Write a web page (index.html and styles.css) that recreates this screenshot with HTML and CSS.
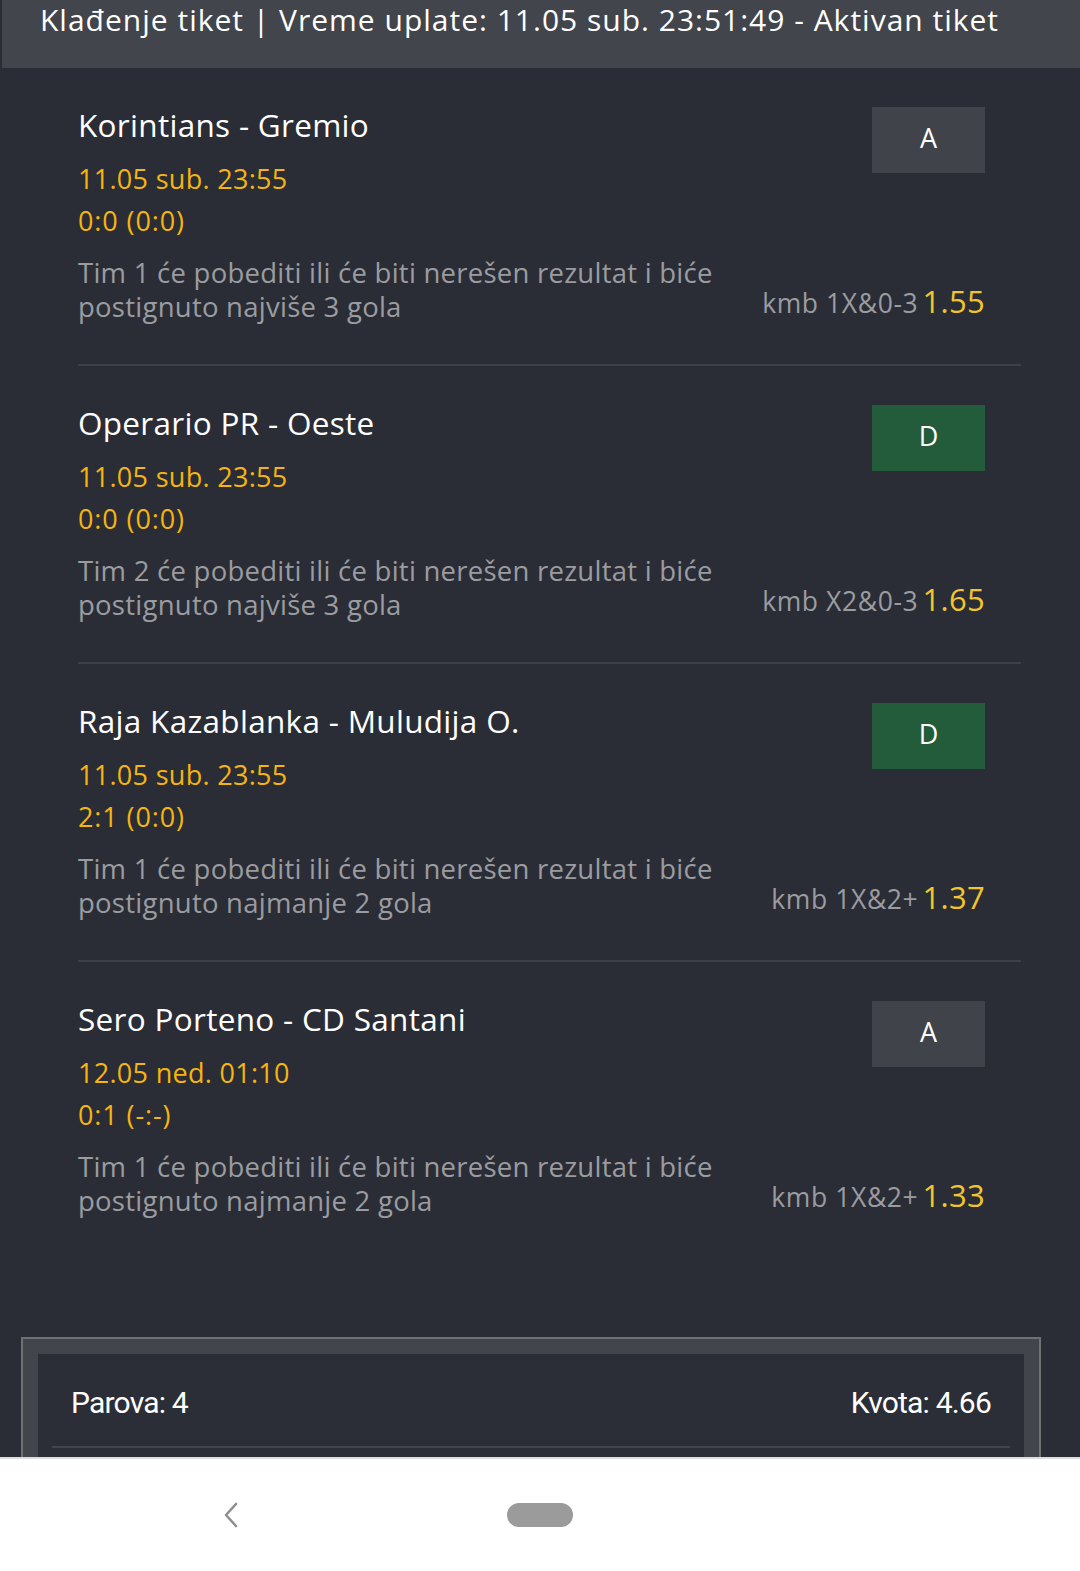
FILE: index.html
```html
<!DOCTYPE html>
<html lang="sr">
<head>
<meta charset="utf-8">
<title>Klađenje tiket</title>
<link rel="stylesheet" href="styles.css">
</head>
<body>
<div class="page">
  <header class="ticket-header">Klađenje tiket | Vreme uplate: 11.05 sub. 23:51:49 - Aktivan tiket</header>

  <main class="matches">
    <section class="match">
      <div class="match-info">
        <h2 class="match-title">Korintians - Gremio</h2>
        <div class="match-time">11.05 sub. 23:55</div>
        <div class="match-score">0:0 (0:0)</div>
        <p class="match-desc">Tim 1 će pobediti ili će biti nerešen rezultat i biće postignuto najviše 3 gola</p>
      </div>
      <div class="match-side">
        <div class="badge badge-grey">A</div>
        <div class="odds"><span class="odds-label">kmb 1X&amp;0-3</span> <span class="odds-value">1.55</span></div>
      </div>
    </section>

    <section class="match">
      <div class="match-info">
        <h2 class="match-title">Operario PR - Oeste</h2>
        <div class="match-time">11.05 sub. 23:55</div>
        <div class="match-score">0:0 (0:0)</div>
        <p class="match-desc">Tim 2 će pobediti ili će biti nerešen rezultat i biće postignuto najviše 3 gola</p>
      </div>
      <div class="match-side">
        <div class="badge badge-green">D</div>
        <div class="odds"><span class="odds-label">kmb X2&amp;0-3</span> <span class="odds-value">1.65</span></div>
      </div>
    </section>

    <section class="match">
      <div class="match-info">
        <h2 class="match-title">Raja Kazablanka - Muludija O.</h2>
        <div class="match-time">11.05 sub. 23:55</div>
        <div class="match-score">2:1 (0:0)</div>
        <p class="match-desc">Tim 1 će pobediti ili će biti nerešen rezultat i biće postignuto najmanje 2 gola</p>
      </div>
      <div class="match-side">
        <div class="badge badge-green">D</div>
        <div class="odds"><span class="odds-label">kmb 1X&amp;2+</span> <span class="odds-value">1.37</span></div>
      </div>
    </section>

    <section class="match match-last">
      <div class="match-info">
        <h2 class="match-title">Sero Porteno - CD Santani</h2>
        <div class="match-time">12.05 ned. 01:10</div>
        <div class="match-score">0:1 (-:-)</div>
        <p class="match-desc">Tim 1 će pobediti ili će biti nerešen rezultat i biće postignuto najmanje 2 gola</p>
      </div>
      <div class="match-side">
        <div class="badge badge-grey">A</div>
        <div class="odds"><span class="odds-label">kmb 1X&amp;2+</span> <span class="odds-value">1.33</span></div>
      </div>
    </section>
  </main>

  <div class="summary">
    <div class="summary-inner">
      <div class="summary-row">
        <span>Parova: 4</span>
        <span>Kvota: 4.66</span>
      </div>
      <div class="summary-rule"></div>
    </div>
  </div>
</div>

<nav class="nav-bar">
  <svg class="nav-back" width="20" height="28" viewBox="0 0 20 28" aria-hidden="true">
    <path d="M14 3 L4 14 L14 25" fill="none" stroke="#8e8e8e" stroke-width="2.6" stroke-linecap="round" stroke-linejoin="round"/>
  </svg>
  <div class="nav-home"></div>
  <div class="nav-spacer"></div>
</nav>
</body>
</html>
```

FILE: styles.css
```css
html, body {
  margin: 0;
  padding: 0;
}

body {
  background: #2a2d36;
  font-family: "Open Sans", "DejaVu Sans", sans-serif;
  height: 1571px;
  overflow: hidden;
}

.page {
  display: flex;
  flex-direction: column;
  height: 1571px;
  overflow: hidden;
}

.ticket-header {
  margin-left: 2px;
  background: #42454c;
  color: #ffffff;
  font-size: 30px;
  line-height: 40px;
  height: 40px;
  padding: 0 0 28px 38px;
  white-space: nowrap;
  overflow: hidden;
  letter-spacing: 1px;
  flex: none;
}

.matches {
  display: flex;
  flex-direction: column;
  padding: 0 59px 0 78px;
  flex: none;
}

.match {
  display: flex;
  justify-content: space-between;
  padding: 37px 36px 40px 0;
  border-bottom: 2px solid #3d4048;
}

.match-last {
  border-bottom: none;
  padding-bottom: 0;
}

.match-info {
  display: flex;
  flex-direction: column;
  width: 660px;
}

.match-title {
  margin: 0;
  font-weight: 400;
  font-size: 31.5px;
  line-height: 40px;
  color: #ffffff;
  letter-spacing: 0.3px;
}

.match-time,
.match-score {
  color: #f5b50f;
  font-size: 27px;
  line-height: 42px;
  letter-spacing: 0.3px;
}

.match-score {
  letter-spacing: 0.9px;
}

.match-time {
  margin-top: 13px;
}

.match-desc {
  margin: 14px 0 0 0;
  color: #9b9ca0;
  font-size: 27.5px;
  line-height: 34px;
  letter-spacing: 0.25px;
}

.match-side {
  display: flex;
  flex-direction: column;
  align-items: flex-end;
  justify-content: space-between;
}

.badge {
  margin-top: 2px;
  width: 113px;
  height: 66px;
  box-sizing: border-box;
  padding-bottom: 5px;
  display: flex;
  align-items: center;
  justify-content: center;
  color: #ffffff;
  font-size: 27px;
}

.badge-grey {
  background: #404349;
}

.badge-green {
  background: #235c3b;
}

.odds {
  white-space: nowrap;
  line-height: 34px;
}

.odds-label {
  color: #9b9ca0;
  font-size: 26.5px;
  letter-spacing: 0.6px;
}

.odds-value {
  color: #f1c52b;
  font-size: 31px;
  letter-spacing: 0.3px;
}

.summary {
  margin: 119px 39px 0 21px;
  border: 2px solid #6e7074;
  border-bottom: none;
  background: #42454c;
  padding: 15px 15px 0 15px;
  flex: 1;
  display: flex;
  flex-direction: column;
}

.summary-inner {
  background: #2b2e37;
  padding: 0 14px;
  flex: 1;
}

.summary-row {
  display: flex;
  justify-content: space-between;
  padding: 0 19px;
  height: 92px;
  align-items: center;
  box-sizing: border-box;
  padding-top: 4px;
  color: #ffffff;
  font-family: "Roboto", "Liberation Sans", sans-serif;
  font-size: 30px;
  letter-spacing: -0.8px;
}

.summary-rule {
  height: 2px;
  background: #42454c;
}

.nav-bar {
  position: fixed;
  left: 0;
  right: 0;
  bottom: 0;
  background: #ffffff;
  border-top: 2px solid #dedede;
  display: flex;
  align-items: center;
  justify-content: space-between;
  padding: 0 0 0 222px;
  box-sizing: border-box;
  height: 114px;
}

.nav-back {
  display: block;
}

.nav-home {
  width: 66px;
  height: 24px;
  border-radius: 12px;
  background: #9b9b9b;
  margin-left: 265px;
}

.nav-spacer {
  flex: 1;
}
```
